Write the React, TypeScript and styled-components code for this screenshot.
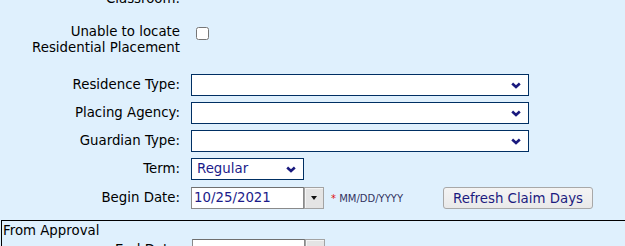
import React from "react";
import styled, { createGlobalStyle } from "styled-components";

const Global = createGlobalStyle`
  html, body { margin: 0; padding: 0; background: #dff0fd; }
  body {
    font-family: "DejaVu Sans", Verdana, sans-serif;
    font-size: 13.33px;
    color: #000;
    overflow: hidden;
  }
`;

const Page = styled.div`
  margin-top: -12px;
  display: flex;
  flex-direction: column;
`;

const Row = styled.div<{ $mt?: number; $top?: boolean; $labelW?: number }>`
  display: grid;
  grid-template-columns: ${(p) => p.$labelW ?? 180}px 1fr;
  column-gap: 11px;
  align-items: ${(p) => (p.$top ? "start" : "center")};
  margin-top: ${(p) => p.$mt ?? 6}px;
  min-height: 22px;
`;

const Label = styled.div`
  text-align: right;
  line-height: 16px;
  white-space: nowrap;
`;

const Controls = styled.div`
  display: flex;
  align-items: center;
`;

const Check = styled.input`
  width: 13px;
  height: 13px;
  margin: 3px 0 0 5px;
`;

const SelectBox = styled.div<{ $w: number }>`
  box-sizing: border-box;
  width: ${(p) => p.$w}px;
  height: 22px;
  border: 1px solid #002f63;
  background: #fff;
  display: flex;
  align-items: center;
  justify-content: space-between;
  padding: 0 7px 0 5px;
  color: #1b1b8a;
  line-height: 16px;
`;

const Chevron = () => (
  <svg width="10" height="7" viewBox="0 0 10 7" aria-hidden="true">
    <polyline points="1.2,1.5 5,5 8.8,1.5" fill="none" stroke="#1a1a7e" strokeWidth="2.6" />
  </svg>
);

const DateField = styled.div`
  display: flex;
  height: 22px;
`;

const DateText = styled.div`
  box-sizing: border-box;
  width: 113px;
  height: 22px;
  border: 1px solid #8a8a8a;
  border-top-color: #6f6f6f;
  background: #fff;
  color: #1b1b8a;
  padding: 0 0 0 2px;
  display: flex;
  align-items: center;
  line-height: 16px;
`;

const DateButton = styled.div`
  box-sizing: border-box;
  width: 20px;
  height: 22px;
  border: 1px solid #a3a3a3;
  background: #e4e4e4;
  box-shadow: inset 1px 1px 0 #f4f4f4;
  display: flex;
  align-items: center;
  justify-content: center;
`;

const Tri = styled.span`
  width: 0;
  height: 0;
  border-left: 3.5px solid transparent;
  border-right: 3.5px solid transparent;
  border-top: 4px solid #111;
`;

const Hint = styled.span`
  margin-left: 7px;
  font-size: 10px;
  color: #33335f;
  white-space: nowrap;
`;

const Req = styled.span`
  color: #e01010;
`;

const Button = styled.button`
  margin-left: 40px;
  box-sizing: border-box;
  width: 150px;
  height: 22px;
  padding: 0;
  border: 1px solid #a8a8a8;
  border-radius: 3px;
  background: linear-gradient(#f4f4f4, #e9e9e9);
  font-family: "DejaVu Sans", Verdana, sans-serif;
  font-size: 13.33px;
  color: #1b1b80;
`;

const Group = styled.div`
  margin: 11px 0 0 1px;
  border: 1px solid #000;
  border-right: none;
  padding: 2px 0 0 1px;
`;

const GroupTitle = styled.div`
  line-height: 16px;
`;

const Select = ({ w, value }: { w: number; value?: string }) => (
  <SelectBox $w={w}>
    <span>{value ?? ""}</span>
    <Chevron />
  </SelectBox>
);

const DateInput = ({ value }: { value: string }) => (
  <DateField>
    <DateText>{value}</DateText>
    <DateButton>
      <Tri />
    </DateButton>
  </DateField>
);

export default function App() {
  return (
    <>
      <Global />
      <Page>
        <Row $mt={0}>
          <Label>Classroom:</Label>
          <Controls />
        </Row>
        <Row $mt={14} $top>
          <Label>
            Unable to locate
            <br />
            Residential Placement
          </Label>
          <Controls>
            <Check type="checkbox" />
          </Controls>
        </Row>
        <Row $mt={18}>
          <Label>Residence Type:</Label>
          <Controls>
            <Select w={338} />
          </Controls>
        </Row>
        <Row>
          <Label>Placing Agency:</Label>
          <Controls>
            <Select w={338} />
          </Controls>
        </Row>
        <Row>
          <Label>Guardian Type:</Label>
          <Controls>
            <Select w={338} />
          </Controls>
        </Row>
        <Row>
          <Label>Term:</Label>
          <Controls>
            <Select w={113} value="Regular" />
          </Controls>
        </Row>
        <Row $mt={7}>
          <Label>Begin Date:</Label>
          <Controls>
            <DateInput value="10/25/2021" />
            <Hint>
              <Req>*</Req> MM/DD/YYYY
            </Hint>
            <Button type="button">Refresh Claim Days</Button>
          </Controls>
        </Row>
        <Group>
          <GroupTitle>From Approval</GroupTitle>
          <Row $mt={0} $labelW={178}>
            <Label>End Date:</Label>
            <Controls>
              <DateInput value="" />
            </Controls>
          </Row>
        </Group>
      </Page>
    </>
  );
}
